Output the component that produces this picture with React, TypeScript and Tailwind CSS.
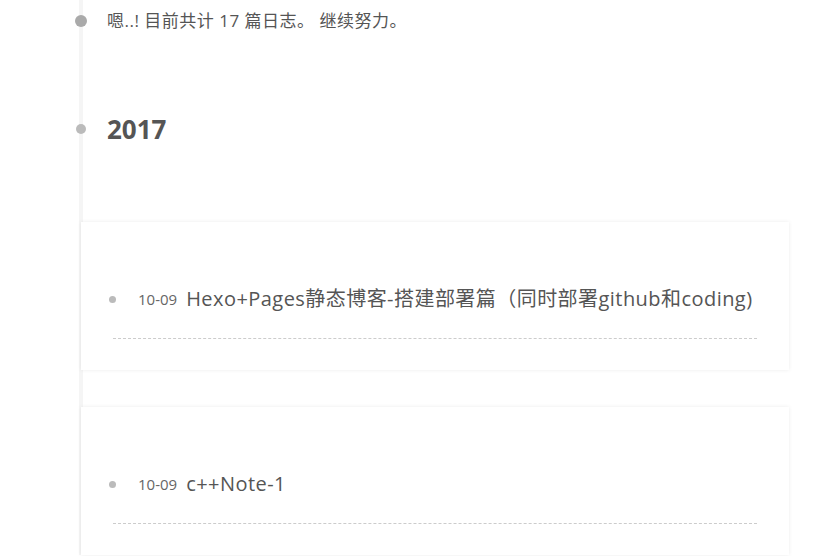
import React from 'react';

const posts = [
  { date: '10-09', title: 'Hexo+Pages静态博客-搭建部署篇（同时部署github和coding)' },
  { date: '10-09', title: 'c++Note-1' },
];

const font = { fontFamily: '"Open Sans", "Noto Sans CJK SC", sans-serif' };

const PostCard: React.FC<{ date: string; title: string }> = ({ date, title }) => (
  <article className="ml-[-2px] w-[708px] bg-white px-[32px] pt-[63px] pb-[31px] shadow-[0_0_4px_rgba(0,0,0,0.08)]">
    <div className="flex items-center border-b border-dashed border-[#ccc] pb-[25px]">
      <span className="ml-[-4px] h-[7px] w-[7px] rounded-full bg-[#bbb]" />
      <span className="ml-[22px] text-[15px] leading-[28px] text-[#666]">{date}</span>
      <a className="ml-[9px] text-[20px] leading-[28px] tracking-[0.45px] text-[#555]">{title}</a>
    </div>
  </article>
);

const App: React.FC = () => {
  return (
    <div className="min-h-[556px] bg-white pl-[79px]" style={font}>
      <div className="border-l-4 border-[#f5f5f5] pt-[10px]">
        {/* total count */}
        <div className="relative flex h-[22px] items-center pl-[24px]">
          <span className="absolute left-[-8px] top-[5px] h-[12px] w-[12px] rounded-full bg-[#aaa]" />
          <span className="text-[17px] tracking-[0.5px] text-[#555]">嗯..! 目前共计 17 篇日志。 继续努力。</span>
        </div>

        {/* year */}
        <div className="relative mt-[82px] flex h-[30px] items-center pl-[24px]">
          <span className="absolute left-[-7px] top-[10px] h-[10px] w-[10px] rounded-full bg-[#bbb]" />
          <h2 className="text-[26px] font-bold text-[#555]">2017</h2>
        </div>

        <div className="mt-[78px] flex flex-col gap-[37px]">
          {posts.map((p) => (
            <PostCard key={p.title} date={p.date} title={p.title} />
          ))}
        </div>
      </div>
    </div>
  );
};

export default App;
